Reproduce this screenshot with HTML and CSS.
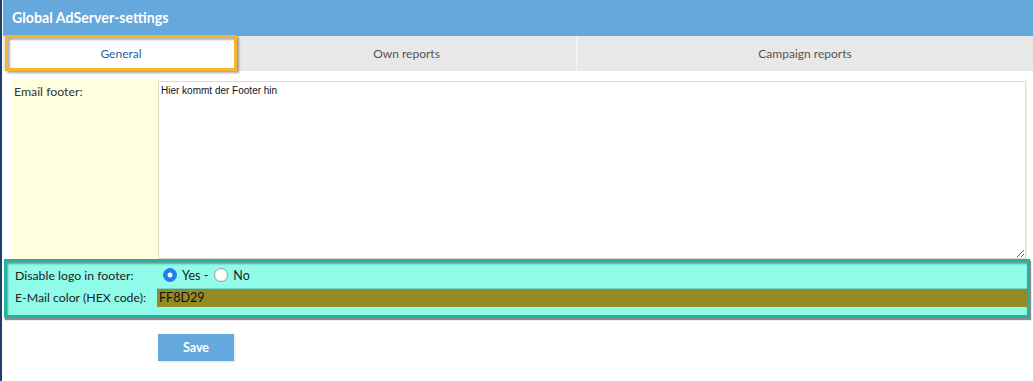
FILE: index.html
```html
<!DOCTYPE html>
<html>
<head>
<meta charset="utf-8">
<link rel="stylesheet" href="styles.css">
</head>
<body>
<div class="edge"></div>
<div class="panel">
  <div class="header">Global AdServer-settings</div>
  <div class="tabs">
    <div class="tab tab-active">General</div>
    <div class="tab tab-own">Own reports</div>
    <div class="tab tab-campaign">Campaign reports</div>
  </div>
  <div class="form">
    <div class="row-footer">
      <div class="label label-yellow">Email footer:</div>
      <div class="value">
        <textarea class="footer-text">Hier kommt der Footer hin</textarea>
      </div>
    </div>
    <div class="highlight">
      <div class="hl-row">
        <div class="hl-label">Disable logo in footer:</div>
        <div class="radios">
          <span class="radio radio-on"></span><span class="radio-text">Yes -</span>
          <span class="radio"></span><span class="radio-text">No</span>
        </div>
      </div>
      <div class="hl-row hl-row2">
        <div class="hl-label">E-Mail color (HEX code):</div>
        <div class="hex">FF8D29</div>
      </div>
    </div>
    <div class="actions">
      <button class="save">Save</button>
    </div>
  </div>
</div>
</body>
</html>
```

FILE: styles.css
```css
* { box-sizing: border-box; }
html, body { margin: 0; padding: 0; background: #fff; }
body {
  display: flex;
  height: 381px;
  overflow: hidden;
  font-family: "Lato", "Open Sans", sans-serif;
}
.edge { width: 2px; background: #1f3d6e; flex: none; }
.panel { flex: 1; margin-left: 1px; }
.header {
  height: 36px;
  background: #64a8dc;
  color: #fff;
  font-weight: bold;
  font-size: 14.2px;
  padding: 9px 0 0 9px;
}
.tabs {
  height: 35px;
  background: #e8e8e8;
  display: flex;
}
.tab {
  font-size: 12px;
  color: #555;
  display: flex;
  align-items: center;
  justify-content: center;
}
.tab-active {
  width: 232px;
  height: 36px;
  margin: -1px 0 0 2px;
  background: #fff;
  border: 3px solid #f6b52c;
  color: #2b5f9e;
  box-shadow: 2px 2px 2px rgba(0,0,0,0.35), inset 2px 2px 2px rgba(0,0,0,0.3);
  position: relative;
  z-index: 1;
}
.tab-own { width: 340px; border-right: 1px solid #f6f6f6; }
.tab-campaign { flex: 1; }
.form { padding: 8px 6px 0 9px; }
.row-footer { display: flex; height: 180px; }
.label-yellow {
  width: 146px;
  background: #ffffdf;
  font-size: 12.3px;
  color: #333;
  padding: 5px 0 0 2px;
}
.value { flex: 1; padding-top: 2px; border-right: 1px solid #f3f3d8; }
.footer-text {
  display: block;
  width: 100%;
  height: 178px;
  border: 1px solid #dcdcc8;
  font-family: "Liberation Sans", Arial, sans-serif;
  font-size: 10px;
  color: #111;
  padding: 3px 2px;
  resize: both;
  margin: 0;
}
.highlight {
  margin: 0 -3px 0 -8px;
  border: 3px solid #22b3a0;
  background: #91fbe9;
  box-shadow: 1px 2px 1px rgba(0,0,0,0.45), inset 1px 2px 2px rgba(0,0,0,0.35);
  padding-bottom: 8px;
}
.hl-row { display: flex; height: 26px; align-items: center; }
.hl-row2 { height: 19px; }
.hl-label {
  width: 150px;
  padding-left: 8px;
  font-size: 12.3px;
  color: #222;
  flex: none;
  white-space: nowrap;
}
.radios { display: flex; align-items: center; font-size: 12.5px; color: #222; }
.radio {
  width: 14px;
  height: 14px;
  border-radius: 50%;
  border: 1px solid #999;
  background: #fff;
  display: inline-block;
  margin: 0 5px 0 6px;
}
.radio-on {
  border-color: #1e7ef0;
  background: radial-gradient(circle, #fff 0 2.2px, #1e7ef0 2.8px);
}
.hex {
  flex: 1;
  height: 19px;
  background: #958a25;
  font-size: 12.5px;
  color: #111;
  padding: 1px 0 0 2px;
  border-top: 1px solid #6dd9c9;
}
.actions { padding: 16px 0 0 146px; }
.save {
  width: 76px;
  height: 27px;
  border: none;
  background: #64a8dc;
  color: #fff;
  font-family: "Lato", "Open Sans", sans-serif;
  font-weight: bold;
  font-size: 12.5px;
  box-shadow: 1px 1px 2px rgba(0,0,0,0.12);
}
```
